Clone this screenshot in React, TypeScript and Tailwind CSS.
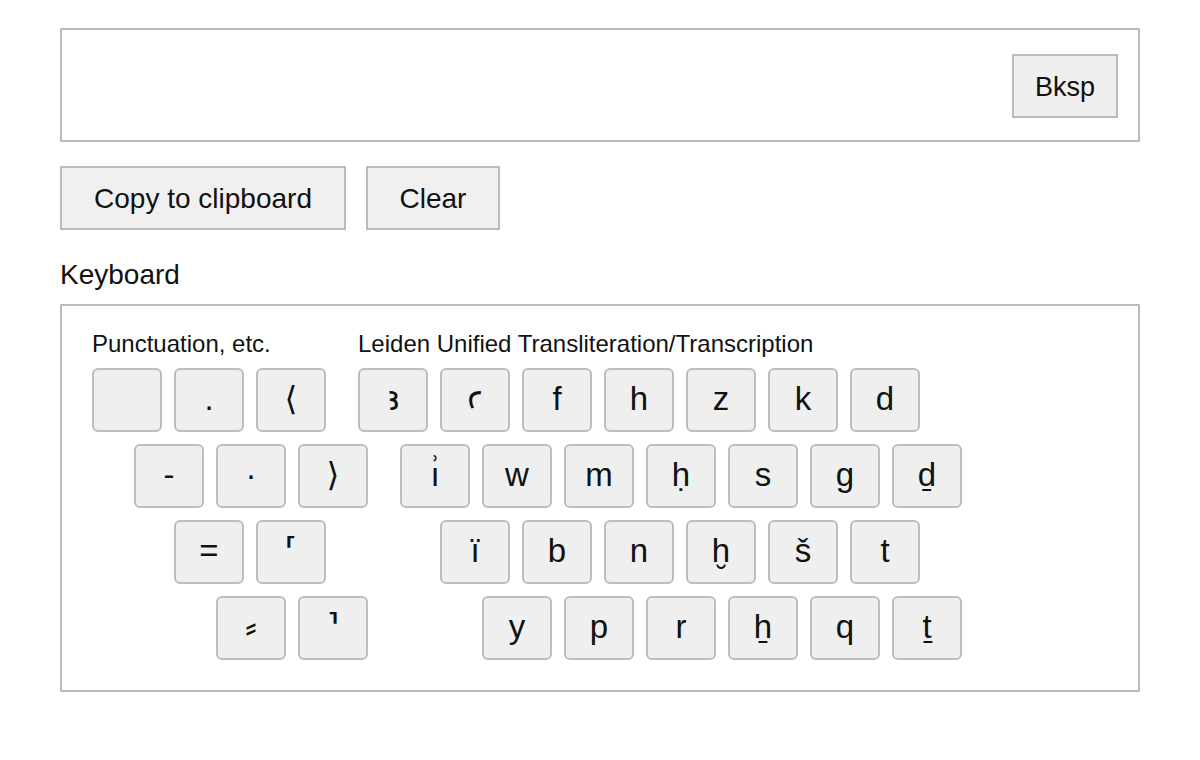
import React from "react";

const offsets = ["pl-0", "pl-[42px]", "pl-[82px]", "pl-[124px]"];

const punct: string[][] = [
  ["\u00a0", ".", "\u27e8"],
  ["-", "\u00b7", "\u27e9"],
  ["=", "\u2e22"],
  ["\u2e17", "\u2e23"],
];

const leiden: string[][] = [
  ["\ua723", "\ua725", "f", "h", "z", "k", "d"],
  ["\u0131\u0357", "w", "m", "\u1e25", "s", "g", "\u1e0f"],
  ["\u00ef", "b", "n", "\u1e2b", "\u0161", "t"],
  ["y", "p", "r", "\u1e96", "q", "\u1e6f"],
];

function Key({ ch }: { ch: string }) {
  return (
    <button className="w-[70px] h-[64px] shrink-0 flex items-center justify-center rounded-[6px] border-2 border-[#bdbdbd] bg-[#efefef] text-[33px] text-[#111] leading-none pb-[4px]">
      {ch}
    </button>
  );
}

function Group({ title, rows, width }: { title: string; rows: string[][]; width: string }) {
  return (
    <div className={`flex flex-col ${width}`}>
      <div className="text-[24px] leading-[28px] text-[#111] mb-[10px] whitespace-nowrap">{title}</div>
      <div className="flex flex-col gap-[12px]">
        {rows.map((r, i) => (
          <div key={i} className={`flex gap-[12px] ${offsets[i]}`}>
            {r.map((c, j) => (
              <Key key={j} ch={c} />
            ))}
          </div>
        ))}
      </div>
    </div>
  );
}

export default function App() {
  return (
    <div
      className="w-[1200px] h-[760px] bg-white pt-[28px] pl-[60px] text-[#111]"
      style={{ fontFamily: '"Liberation Sans", Arial, "DejaVu Sans", sans-serif' }}
    >
      <div className="w-[1080px]">
        <div className="h-[114px] border-2 border-[#bbbbbb] flex items-start justify-end pr-[20px] pt-[24px]">
          <button className="w-[106px] h-[64px] border-2 border-[#bbbbbb] bg-[#efefef] text-[27px] pt-[2px]">Bksp</button>
        </div>
        <div className="flex gap-[20px] mt-[24px]">
          <button className="w-[286px] h-[64px] border-2 border-[#bbbbbb] bg-[#f0f0f0] text-[28px] pt-[2px]">Copy to clipboard</button>
          <button className="w-[134px] h-[64px] border-2 border-[#bbbbbb] bg-[#f0f0f0] text-[28px] pt-[2px]">Clear</button>
        </div>
        <div className="mt-[29px] text-[28px] leading-[32px] h-[32px]">Keyboard</div>
        <div className="mt-[13px] h-[388px] border-2 border-[#bbbbbb] pl-[30px] pt-[24px] flex">
          <Group title="Punctuation, etc." rows={punct} width="w-[266px]" />
          <Group title="Leiden Unified Transliteration/Transcription" rows={leiden} width="" />
        </div>
      </div>
    </div>
  );
}
